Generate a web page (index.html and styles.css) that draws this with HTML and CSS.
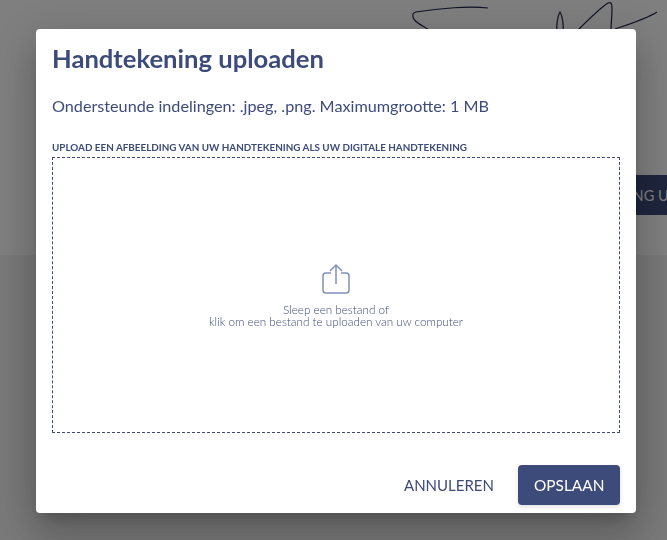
FILE: index.html
```html
<!DOCTYPE html>
<html lang="nl">
<head>
    <meta charset="UTF-8">
    <title>Handtekening uploaden</title>
    <link rel="stylesheet" href="styles.css">
</head>
<body>
    <div class="page">
        <div class="signature-section">
            <svg class="signature" width="287" height="60" viewBox="380 0 287 60" fill="none" stroke="#1f2547" stroke-width="1.2">
                <path d="M488 8 C470 6 440 8 416 12 C411 13 412 19 418 23 C422 26 425 27 429 30"/>
                <path d="M557 32 C556 24 558 15 560 12 C562 15 564 24 563 32"/>
                <path d="M577 31 C588 20 600 8 608 3 C611 2 612 3 612 8 C612 16 611 24 611 32"/>
                <path d="M615 29 C630 24 646 19 657 12"/>
            </svg>
            <button class="change-button">HANDTEKENING UPLOADEN</button>
        </div>
        <div class="lower-section"></div>
    </div>

    <div class="overlay">
        <div class="modal">
            <h2 class="modal-title">Handtekening uploaden</h2>
            <p class="modal-info">Ondersteunde indelingen: .jpeg, .png. Maximumgrootte: 1 MB</p>
            <div class="drop-label">UPLOAD EEN AFBEELDING VAN UW HANDTEKENING ALS UW DIGITALE HANDTEKENING</div>
            <div class="dropzone">
                <svg class="upload-icon" width="28" height="32" viewBox="0 0 28 32" fill="none" stroke="#7f90b8" stroke-width="1.5">
                    <path d="M14 21 V2"/>
                    <path d="M8 8 L14 2 L20 8"/>
                    <path d="M9 10 H4 Q1 10 1 13 V27 Q1 30 4 30 H24 Q27 30 27 27 V13 Q27 10 24 10 H19"/>
                </svg>
                <div class="drop-text">Sleep een bestand of<br>klik om een bestand te uploaden van uw computer</div>
            </div>
            <div class="modal-actions">
                <button class="btn-cancel">ANNULEREN</button>
                <button class="btn-save">OPSLAAN</button>
            </div>
        </div>
    </div>
</body>
</html>
```

FILE: styles.css
```css
html, body {
    margin: 0;
    height: 100%;
    overflow: hidden;
}

body {
    font-family: "Lato", "Noto Sans", Arial, sans-serif;
    color: #3d4b7a;
}

.page {
    height: 540px;
    overflow: hidden;
    display: flex;
    flex-direction: column;
    background-color: #fff;
}

.signature-section {
    height: 255px;
    position: relative;
    overflow: hidden;
    background-color: #fff;
}

.signature {
    position: absolute;
    left: 380px;
    top: 0;
}

.change-button {
    position: absolute;
    left: 518px;
    top: 175px;
    width: 240px;
    height: 40px;
    background-color: #3d4b7a;
    color: #fff;
    border: none;
    font-family: inherit;
    font-size: 14.5px;
    white-space: nowrap;
}

.lower-section {
    flex: 1;
    background-color: #f2f2f2;
}

.overlay {
    position: fixed;
    top: 0;
    left: 0;
    right: 0;
    bottom: 0;
    background-color: rgba(0, 0, 0, 0.5);
}

.modal {
    position: absolute;
    left: 36px;
    top: 29px;
    width: 600px;
    height: 484px;
    box-sizing: border-box;
    padding: 15px 16px 8px;
    background-color: #fff;
    border-radius: 4px;
    box-shadow: 0 11px 15px -7px rgba(0, 0, 0, 0.2), 0 24px 38px 3px rgba(0, 0, 0, 0.14), 0 9px 46px 8px rgba(0, 0, 0, 0.12);
    display: flex;
    flex-direction: column;
}

.modal-title {
    margin: 0;
    font-size: 25.6px;
    line-height: 28px;
    font-weight: 700;
}

.modal-info {
    margin: 23px 0 0;
    font-size: 16.2px;
    line-height: 22px;
}

.drop-label {
    margin-top: 23px;
    font-size: 9.9px;
    line-height: 14px;
    font-weight: 700;
}

.dropzone {
    margin-top: 3px;
    flex: none;
    height: 276px;
    box-sizing: border-box;
    border: 1px dashed #3d4b7a;
    display: flex;
    flex-direction: column;
    align-items: center;
    justify-content: center;
}

.upload-icon {
    margin-bottom: 8px;
}

.drop-text {
    font-size: 11.7px;
    line-height: 12px;
    font-weight: 300;
    text-align: center;
}

.modal-actions {
    margin-top: 32px;
    display: flex;
    justify-content: flex-end;
    align-items: center;
    gap: 8px;
}

.modal-actions button {
    height: 40px;
    border: none;
    border-radius: 4px;
    font-family: inherit;
    font-size: 15px;
    padding: 0 16px;
}

.btn-cancel {
    background: none;
    color: #3d4b7a;
}

.modal-actions .btn-save {
    width: 102px;
    font-size: 15.4px;
    background-color: #3d4b7a;
    color: #fff;
    box-shadow: 0 2px 4px rgba(0, 0, 0, 0.12);
}
```
